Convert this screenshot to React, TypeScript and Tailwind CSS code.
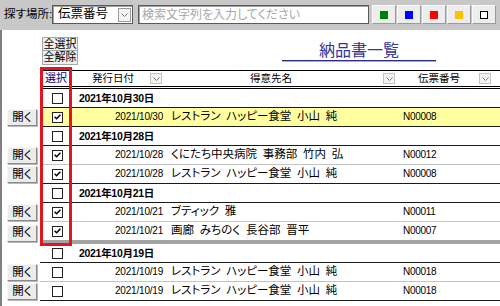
import React from 'react';

type Row =
  | { kind: 'group'; label: string }
  | { kind: 'item'; date: string; name: string; no: string; checked: boolean; active?: boolean };

const rows: Row[] = [
  { kind: 'group', label: '2021年10月30日' },
  { kind: 'item', date: '2021/10/30', name: 'レストラン\u2002ハッピー食堂\u2002小山\u2002純', no: 'N00008', checked: true, active: true },
  { kind: 'group', label: '2021年10月28日' },
  { kind: 'item', date: '2021/10/28', name: 'くにたち中央病院\u2002事務部\u2002竹内\u2002弘', no: 'N00012', checked: true },
  { kind: 'item', date: '2021/10/28', name: 'レストラン\u2002ハッピー食堂\u2002小山\u2002純', no: 'N00008', checked: true },
  { kind: 'group', label: '2021年10月21日' },
  { kind: 'item', date: '2021/10/21', name: 'ブティック\u2002雅', no: 'N00011', checked: true },
  { kind: 'item', date: '2021/10/21', name: '画廊\u2002みちのく\u2002長谷部\u2002晋平', no: 'N00007', checked: true },
  { kind: 'group', label: '2021年10月19日' },
  { kind: 'item', date: '2021/10/19', name: 'レストラン\u2002ハッピー食堂\u2002小山\u2002純', no: 'N00018', checked: false },
  { kind: 'item', date: '2021/10/19', name: 'レストラン\u2002ハッピー食堂\u2002小山\u2002純', no: 'N00018', checked: false },
];

const swatches = ['bg-[#008000]', 'bg-[#0000ff]', 'bg-[#ff0000]', 'bg-[#ffc000]', 'bg-white border border-black'];

function Chevron() {
  return (
    <svg width="7" height="4" viewBox="0 0 7 4">
      <path d="M0.5 0.5 L3.5 3.5 L6.5 0.5" fill="none" stroke="#7a7a7a" strokeWidth="1" />
    </svg>
  );
}

function SortBox() {
  return (
    <span className="flex h-[11px] w-[12px] items-center justify-center border border-[#c4c4c4] bg-[#f2f2f2]">
      <Chevron />
    </span>
  );
}

function Check({ on }: { on: boolean }) {
  return (
    <span className="flex h-[11px] w-[11px] items-center justify-center border border-[#222] bg-white">
      {on && (
        <svg width="7" height="6" viewBox="0 0 7 6">
          <path d="M0.6 2.8 L2.6 4.8 L6.4 0.8" fill="none" stroke="#000" strokeWidth="1.5" />
        </svg>
      )}
    </span>
  );
}

function OpenButton() {
  return (
    <span className="flex h-[17px] w-[30px] items-center justify-center border border-t-[#f8f8f8] border-l-[#f8f8f8] border-r-[#8a8a8a] border-b-[#8a8a8a] bg-[#ececec] text-[11.5px] leading-none shadow-[1px_1px_0_#b8b8b8]">
      開く
    </span>
  );
}

export default function App() {
  return (
    <div className="relative h-[306px] w-[500px] overflow-hidden bg-white text-black font-['Liberation_Sans','Noto_Sans_CJK_JP',sans-serif] [font-feature-settings:'palt']">
      {/* search bar */}
      <div className="flex h-[30px] items-start bg-[#c8c8c8] pt-[5px]">
        <span className="ml-[4px] w-[48px] shrink-0 whitespace-nowrap text-[11.5px] leading-[19px]">探す場所:</span>
        <div className="flex h-[19px] w-[81px] shrink-0 items-center justify-between border border-[#5a5a5a] bg-white pl-[5px] pr-[1px] shadow-[inset_1px_1px_0_#a0a0a0]">
          <span className="whitespace-nowrap text-[12.5px] leading-none">伝票番号</span>
          <span className="flex h-[14px] w-[13px] items-center justify-center border border-[#9a9a9a] bg-[#f4f4f4]">
            <Chevron />
          </span>
        </div>
        <div className="ml-[5px] flex h-[19px] w-[231px] shrink-0 items-center border border-[#5a5a5a] bg-white pl-[3px] shadow-[inset_1px_1px_0_#a0a0a0]">
          <span className="whitespace-nowrap text-[12px] leading-none text-[#a8a8a8]">検索文字列を入力してください</span>
        </div>
        <div className="ml-[3px] flex gap-[1px]">
          {swatches.map((s, i) => (
            <span
              key={i}
              className="flex h-[19px] w-[24px] items-center justify-center border border-t-[#fafafa] border-l-[#fafafa] border-r-[#9a9a9a] border-b-[#9a9a9a] bg-[#ededed]"
            >
              <span className={`h-[8px] w-[8px] ${s}`} />
            </span>
          ))}
        </div>
      </div>

      {/* list area */}
      <div className="h-[276px] border-l-2 border-[#808080]">
        <div className="flex h-[40px] items-start">
          <div className="w-[40px] shrink-0" />
          <div className="flex shrink-0 flex-col pt-[7px]">
            <span className="flex h-[14px] w-[36px] items-center justify-center whitespace-nowrap border border-[#a8a8a8] bg-[#eeeeee] text-[11px] leading-none">全選択</span>
            <span className="flex h-[14px] w-[36px] items-center justify-center whitespace-nowrap border border-t-0 border-[#a8a8a8] bg-[#eeeeee] text-[11px] leading-none">全解除</span>
          </div>
          <div className="ml-[204px] mt-[12px] w-[154px] shrink-0 whitespace-nowrap border-b border-[#2d2d86] text-center text-[16px] leading-[18px] text-[#34349a] shadow-[0_1px_0_#a8a8d8]">
            納品書一覧
          </div>
        </div>

        {/* header */}
        <div className="flex h-[19px]">
          <div className="w-[38px] shrink-0" />
          <div className="flex flex-1 items-center border-t border-b-[3px] border-double border-black text-[10.5px] leading-none">
            <div className="w-[32px] text-center text-[11px] text-[#00008a]">選択</div>
            <div className="flex w-[93px] items-center pl-[20px]">
              <span className="w-[58px]">発行日付</span>
              <SortBox />
            </div>
            <div className="flex w-[231px] items-center pl-[85px]">
              <span className="w-[133px]">得意先名</span>
              <SortBox />
            </div>
            <div className="flex items-center pl-[22px]">
              <span className="w-[61px]">伝票番号</span>
              <SortBox />
            </div>
          </div>
        </div>

        {/* rows */}
        {rows.map((r, i) => {
          const next = rows[i + 1];
          const thick = i === 7;
          const dark = r.kind === 'group' || next?.kind === 'group' || !next;
          const border = thick
            ? 'border-b-[4px] border-[#a4a4a4] h-[22px]'
            : dark
              ? 'border-b border-[#1a1a1a] h-[19px]'
              : 'border-b border-[#c4c4c4] h-[19px]';
          return (
            <div key={i} className="flex">
              <div className="flex w-[38px] shrink-0 items-center pl-[5px]">
                {r.kind === 'item' && <OpenButton />}
              </div>
              <div
                className={`flex flex-1 items-center ${border} ${
                  r.kind === 'item' && r.active ? 'bg-[#ffffa0]' : ''
                }`}
              >
                <div className="flex w-[32px] shrink-0 justify-center pl-[2px]">
                  <Check on={r.kind === 'item' && r.checked} />
                </div>
                {r.kind === 'group' ? (
                  <span className="whitespace-nowrap pl-[7px] text-[10.5px] font-bold leading-none tracking-[-0.3px]">
                    {r.label}
                  </span>
                ) : (
                  <>
                    <span className="w-[99px] shrink-0 whitespace-nowrap pl-[43px] text-[10px] leading-none tracking-[-0.2px]">
                      {r.date}
                    </span>
                    <span className="w-[232px] shrink-0 whitespace-pre text-[11.5px] leading-none">{r.name}</span>
                    <span className="whitespace-nowrap text-[10px] leading-none tracking-[-0.3px]">{r.no}</span>
                  </>
                )}
              </div>
            </div>
          );
        })}
      </div>

      {/* red highlight around the selection column */}
      <div className="absolute left-[40px] top-[67px] h-[179px] w-[32px] border-[3px] border-[#e3151e]" />
    </div>
  );
}
